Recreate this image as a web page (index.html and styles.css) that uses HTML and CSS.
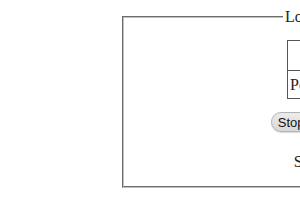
FILE: index.html
```html
<!DOCTYPE html>
<html lang="en">
<head>
    <meta charset="UTF-8">
    <title>Recorder</title>
    <link rel="stylesheet" href="styles.css">
</head>
<body>
    <div class="page">
        <fieldset class="panel">
            <legend class="panel-title">Loudness</legend>
            <div class="panel-body">
                <table class="readout">
                    <tr><th>Level</th></tr>
                    <tr><td>Peak</td></tr>
                </table>
                <button class="stop-btn">Stop recording</button>
                <p class="status">Stopped</p>
            </div>
        </fieldset>
    </div>
</body>
</html>
```

FILE: styles.css
```css
/* halaman dasar */
* {
    box-sizing: border-box;
}

body {
    margin: 0;
    background-color: #fff;
    font-family: 'Liberation Serif', 'Times New Roman', serif;
    font-size: 16px;
    color: #222;
}

/* bingkai 300x210, isi yang lebih lebar dipotong */
.page {
    width: 300px;
    height: 210px;
    padding: 8px 0 0 8px;
    overflow: hidden;
}

/* kotak fieldset */
.panel {
    width: 396px;
    min-width: 396px;
    margin: 0 0 0 114px;
    padding: 5px 12px 15px;
    border: 2px groove #c0c0c0;
}

.panel-title {
    margin-left: 147px;
    padding: 0 2px;
    line-height: 18px;
}

.panel-body {
    display: flex;
    flex-direction: column;
    align-items: center;
}

/* tabel */
.readout {
    width: 66px;
    margin-top: 9px;
    border: 1px solid #555;
    border-collapse: collapse;
}

.readout th,
.readout td {
    border: 1px solid #555;
    padding: 0 2px;
}

.readout th {
    height: 30px;
    font-weight: normal;
}

.readout td {
    height: 28px;
    text-align: left;
    white-space: nowrap;
}

/* tombol */
.stop-btn {
    height: 20px;
    margin-top: 13px;
    padding: 0 6px;
    font-family: 'Liberation Sans', Arial, sans-serif;
    font-size: 13px;
    color: #111;
    background: linear-gradient(#ececec, #d8d8d8);
    border: 1px solid #b4b4b4;
    border-radius: 10px;
    box-shadow: 0 1px 1px rgba(0, 0, 0, 0.15);
}

.status {
    margin: 21px 0 0;
    line-height: 18px;
    white-space: nowrap;
}
```
